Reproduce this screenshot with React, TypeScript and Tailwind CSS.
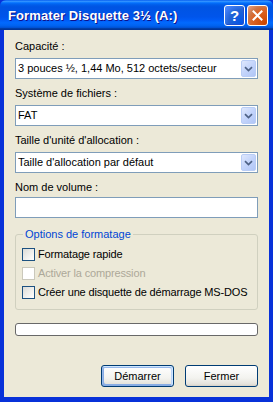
import React from "react";

const font = "font-['Liberation_Sans','Arial',sans-serif]";

function Combo({ value }: { value: string }) {
  return (
    <div className="flex h-[21px] items-center border border-[#7f9db9] bg-white pl-[2px] pr-[1px]">
      <span className="flex-1 truncate text-[11px] leading-[13px] text-black">{value}</span>
      <div className="flex h-[17px] w-[15px] items-center justify-center rounded-[2px] border border-[#b9cdf6] bg-[linear-gradient(135deg,#dfe8fd_0%,#c3d4fb_50%,#b1c6f6_100%)]">
        <svg width="9" height="6" viewBox="0 0 9 6">
          <path d="M1 1.2 L4.5 4.5 L8 1.2" fill="none" stroke="#4d6185" strokeWidth="1.7" />
        </svg>
      </div>
    </div>
  );
}

function Check({ label, disabled }: { label: string; disabled?: boolean }) {
  return (
    <div className="flex h-[19px] items-center">
      <div
        className={
          disabled
            ? "h-[13px] w-[13px] shrink-0 border border-[#cac8bb] bg-white"
            : "h-[13px] w-[13px] shrink-0 border border-[#1c5180] bg-[linear-gradient(135deg,#dcdcd7_0%,#f2f2ef_60%,#ffffff_100%)]"
        }
      />
      <span
        className={
          "ml-[3px] whitespace-nowrap text-[11px] leading-[13px] tracking-[-0.15px] " +
          (disabled ? "text-[#aca899]" : "text-black")
        }
      >
        {label}
      </span>
    </div>
  );
}

export default function App() {
  return (
    <div className={"flex h-[402px] w-[273px] flex-col overflow-hidden bg-[#0831d9] " + font}>
      {/* title bar */}
      <div className="flex h-[30px] shrink-0 items-center rounded-t-[6px] bg-[linear-gradient(180deg,#0058ee_0%,#3593ff_4%,#288eff_6%,#127dff_8%,#036ffc_10%,#0262ee_14%,#0057e5_20%,#0054e3_24%,#0055eb_56%,#005bf5_66%,#026afe_76%,#0062ef_86%,#0052d6_92%,#0040ab_94%,#003092_100%)] pl-[8px] pr-[5px]">
        <span className="flex-1 pt-[1px] text-[13px] font-bold leading-[16px] tracking-[0.1px] text-white [text-shadow:1px_1px_#0f1089]">
          Formater Disquette 3½ (A:)
        </span>
        <div className="flex h-[21px] w-[21px] items-center justify-center rounded-[3px] border border-white bg-[radial-gradient(circle_at_90%_90%,#0054e9_0%,#2263d5_55%,#4480f7_85%,#4f8bf8_100%)] shadow-[inset_-1px_-1px_#1f4ecc]">
          <span className="text-[15px] font-bold leading-[15px] text-white">?</span>
        </div>
        <div className="ml-[2px] flex h-[21px] w-[21px] items-center justify-center rounded-[3px] border border-white bg-[radial-gradient(circle_at_90%_90%,#cc4600_0%,#dc6527_55%,#cd7546_70%,#e8a487_100%)]">
          <svg width="11" height="11" viewBox="0 0 11 11">
            <path d="M1.5 1.5 L9.5 9.5 M9.5 1.5 L1.5 9.5" stroke="white" strokeWidth="2" strokeLinecap="square" />
          </svg>
        </div>
      </div>

      {/* body */}
      <div className="mx-[4px] mb-[5px] flex flex-1 flex-col bg-[#ece9d8] px-[11px] pt-[10px] text-black">
        <div className="text-[11px] leading-[13px]">Capacité :</div>
        <div className="mt-[5px]">
          <Combo value="3 pouces ½, 1,44 Mo, 512 octets/secteur" />
        </div>
        <div className="mt-[8px] text-[11px] leading-[13px]">Système de fichiers :</div>
        <div className="mt-[5px]">
          <Combo value="FAT" />
        </div>
        <div className="mt-[8px] text-[11px] leading-[13px]">Taille d'unité d'allocation :</div>
        <div className="mt-[5px]">
          <Combo value="Taille d'allocation par défaut" />
        </div>
        <div className="mt-[8px] text-[11px] leading-[13px]">Nom de volume :</div>
        <div className="mt-[3px] h-[21px] border border-[#7f9db9] bg-white" />

        <fieldset className="mt-[10px] min-w-0 rounded-[3px] border border-[#d0d0bf] px-[6px] pb-[7px] pt-[4px]">
          <legend className="ml-[1px] px-[2px] text-[11px] leading-[13px] text-[#0046d5]">Options de formatage</legend>
          <Check label="Formatage rapide" />
          <Check label="Activer la compression" disabled />
          <Check label="Créer une disquette de démarrage MS-DOS" />
        </fieldset>

        <div className="mt-[13px] h-[13px] rounded-[3px] border border-[#686868] bg-white" />

        <div className="mt-[29px] flex justify-end gap-[11px]">
          <button className="h-[22px] w-[73px] rounded-[3px] border border-[#003c74] bg-[linear-gradient(180deg,#ffffff_0%,#f3f3ef_60%,#e5e3dc_90%,#d6d0c5_100%)] text-[11px] text-black shadow-[inset_-1px_1px_#cee7ff,inset_1px_2px_#98b8ea,inset_-2px_2px_#bcd4f6,inset_1px_-1px_#89ade4,inset_2px_-2px_#89ade4]">
            Démarrer
          </button>
          <button className="h-[22px] w-[73px] rounded-[3px] border border-[#003c74] bg-[linear-gradient(180deg,#ffffff_0%,#f3f3ef_60%,#e5e3dc_90%,#d6d0c5_100%)] text-[11px] text-black">
            Fermer
          </button>
        </div>
      </div>
    </div>
  );
}
